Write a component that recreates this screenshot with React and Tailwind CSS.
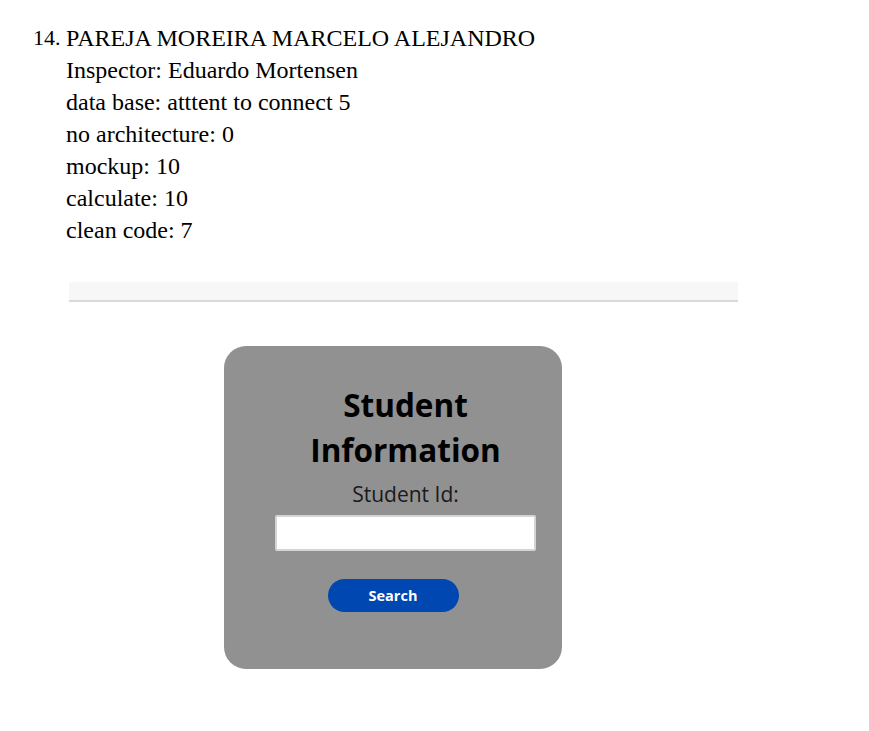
export default function App() {
  const lines = [
    "Inspector: Eduardo Mortensen",
    "data base: atttent to connect 5",
    "no architecture: 0",
    "mockup: 10",
    "calculate: 10",
    "clean code: 7",
  ];
  return (
    <div className="w-[869px] h-[731px] bg-white relative overflow-hidden">
      <div
        className="pt-[22px] pl-[33px] text-[24px] leading-[32px] text-black flex"
        style={{ fontFamily: '"Liberation Serif", "Times New Roman", serif' }}
      >
        <div className="w-[33px] text-[22px] text-right pr-[6px]">14.</div>
        <div className="flex flex-col">
          <div>PAREJA MOREIRA MARCELO ALEJANDRO</div>
          {lines.map((l) => (
            <div key={l}>{l}</div>
          ))}
        </div>
      </div>
      <div className="mt-[36px] ml-[69px] w-[669px] h-[20px] bg-[#f7f7f7] border-b-2 border-[#d9d9d9]" />
      <div
        className="mt-[44px] ml-[224px] w-[338px] h-[323px] bg-[#919191] rounded-[22px] flex flex-col items-center pt-[36px]"
        style={{ fontFamily: '"Open Sans", sans-serif' }}
      >
        <div className="flex flex-col items-center pl-[25px]">
          <div className="text-[31.5px] font-bold leading-[45px] text-center text-black">
            Student
            <br />
            Information
          </div>
          <div className="mt-[9px] text-[21px] leading-[26px] text-[#1a1a1a]">Student Id:</div>
          <div className="mt-[8px] w-[261px] h-[36px] bg-white border-2 border-[#d4d4d4] rounded-[2px]" />
        </div>
        <div className="mt-[28px] w-[131px] h-[33px] rounded-full bg-[#0047b2] text-white text-[14.5px] font-bold flex items-center justify-center">
          Search
        </div>
      </div>
    </div>
  );
}
